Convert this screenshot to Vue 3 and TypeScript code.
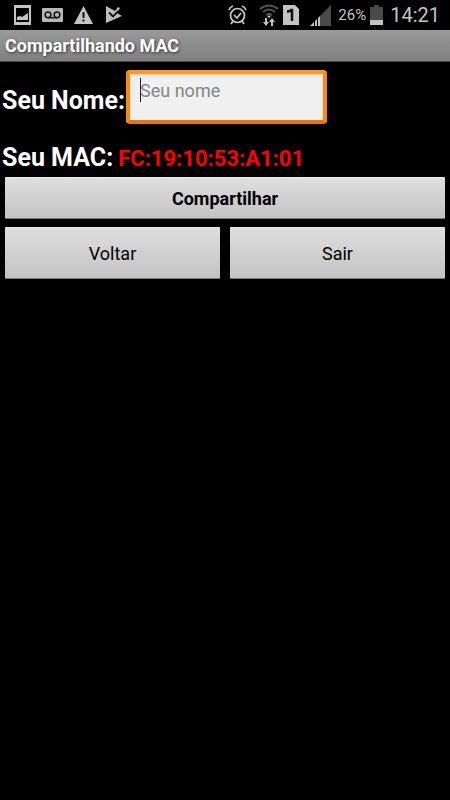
<script setup lang="ts">
import { ref } from 'vue'

const name = ref('')
const mac = 'FC:19:10:53:A1:01'
const battery = '26%'
const time = '14:21'
</script>

<template>
  <div class="screen">
    <header class="status">
      <div class="notifications">
        <svg width="17" height="20" viewBox="0 0 17 20" aria-hidden="true">
          <path fill="#c4c4c4" fill-rule="evenodd" d="M0 0h17v20H0zM2 3v14h13V3z" />
          <path fill="#c4c4c4" d="M3 15v-3l3-1 2 1 3-2 3-2v7z" />
        </svg>
        <svg width="21" height="14" viewBox="0 0 21 14" aria-hidden="true">
          <rect width="21" height="14" rx="1" fill="#b8b8b8" />
          <g fill="none" stroke="#151515" stroke-width="1.5">
            <circle cx="6" cy="6.8" r="2.9" />
            <circle cx="15" cy="6.8" r="2.9" />
            <path d="M6 9.7h9" />
          </g>
        </svg>
        <svg width="19" height="18" viewBox="0 0 19 18" aria-hidden="true">
          <path fill="#c4c4c4" d="M9.5 0L19 18H0z" />
          <path fill="#111" d="M8.500 6h2v6h-2zM8.500 13.500h2v2h-2z" />
        </svg>
        <svg class="check" width="17" height="18" viewBox="0 0 17 18" aria-hidden="true">
          <path fill="#bdbdbd" d="M0 0l9 5 3-4 2 1-3 5 5 3L0 17z" />
          <path fill="none" stroke="#111" stroke-width="1.8" d="M3 6.500l4 4L12.500 5" />
        </svg>
      </div>
      <div class="system">
        <svg class="alarm" width="19" height="20" viewBox="0 0 19 20" aria-hidden="true">
          <g fill="none" stroke="#c8c8c8" stroke-width="1.7">
            <circle cx="9.5" cy="10.5" r="7" />
            <path d="M6 10l3 3 4-5M1 5q1-3 4-4M18 5q-1-3-4-4M5 16l-2 3M14 16l2 3" />
          </g>
        </svg>
        <svg class="wifi" width="20" height="22" viewBox="0 0 20 22" aria-hidden="true">
          <path fill="none" stroke="#555" stroke-width="2" d="M1 5q9-7 18 0M4 8q6-5 12 0M7 11q3-2 6 0" />
          <path fill="#c4c4c4" d="M8 12q2-1 4 0l-2 2zM6 14h2v4h2l-3 4-3-4h2zM12 22v-4h-2l3-4 3 4h-2v4z" />
        </svg>
        <svg class="sim" width="16" height="20" viewBox="0 0 16 20" aria-hidden="true">
          <path fill="#c4c4c4" d="M0 0h12l4 4v16H0z" />
          <path fill="none" stroke="#111" stroke-width="2.5" d="M4 6.500q4 0 5-2.500V16" />
        </svg>
        <svg class="signal" width="21" height="21" viewBox="0 0 21 21" aria-hidden="true">
          <path fill="#4a4a4a" d="M21 0v21H10V11z" />
          <path fill="#c4c4c4" d="M0 21l4-4v4zM5 21v-5l2-2v7zM8 21v-8l2-2v10z" />
        </svg>
        <span class="battery-text">{{ battery }}</span>
        <svg class="battery" width="13" height="20" viewBox="0 0 13 20" aria-hidden="true">
          <path fill="#4a4a4a" d="M0 2h4V0h5v2h4v13H0z" />
          <path fill="#c4c4c4" d="M0 15h13v5H0z" />
        </svg>
        <time class="clock">{{ time }}</time>
      </div>
    </header>

    <h1 class="title">Compartilhando MAC</h1>

    <main class="content">
      <div class="row name-row">
        <label class="label" for="name">Seu Nome:</label>
        <div class="field">
          <input id="name" v-model="name" class="input" type="text" placeholder="Seu nome" />
          <span class="caret"></span>
        </div>
      </div>
      <div class="row mac-row">
        <span class="label">Seu MAC:</span>
        <span class="mac">{{ mac }}</span>
      </div>
      <div class="actions">
        <button class="button share" type="button">Compartilhar</button>
        <button class="button" type="button">Voltar</button>
        <button class="button" type="button">Sair</button>
      </div>
    </main>
  </div>
</template>

<style>
body {
  margin: 0;
  background: #000;
}
</style>

<style scoped>
.screen {
  min-height: 100vh;
  background: #000;
  color: #fff;
  font-family: Roboto, "Liberation Sans", sans-serif;
}

.status {
  display: flex;
  align-items: center;
  justify-content: space-between;
  height: 30px;
  padding: 0 10px 0 14px;
  color: #c4c4c4;
}

.status svg {
  flex: none;
}

.notifications,
.system {
  display: flex;
  align-items: center;
}

.notifications {
  gap: 11px;
}

.check {
  margin-left: 2px;
}

.wifi {
  margin-left: 12px;
}

.sim {
  margin-left: 4px;
}

.signal {
  margin-left: 11px;
}

.battery-text {
  margin-left: 7px;
  font-size: 15px;
}

.battery {
  margin-left: 4px;
}

.clock {
  margin-left: 7px;
  font-size: 20px;
}

.title {
  box-sizing: border-box;
  height: 32px;
  margin: 0;
  padding: 0 5px;
  border-bottom: 1px solid #4a4a4a;
  background: linear-gradient(#9a9a9a, #808080);
  font-size: 18px;
  font-weight: 700;
  line-height: 32px;
  text-shadow: 1px 1px 3px #333;
}

.row {
  display: flex;
  align-items: center;
  padding: 0 2px;
}

.name-row {
  padding-top: 8px;
}

.mac-row {
  align-items: baseline;
  gap: 5px;
  height: 30px;
  padding-top: 18px;
}

.label {
  font-size: 25px;
  font-weight: 700;
  line-height: 32px;
}

.name-row .label {
  padding-top: 8px;
}

.mac {
  color: #f00;
  font-size: 22px;
  font-weight: 700;
}

.field {
  position: relative;
  width: 201px;
  margin-left: 1px;
}

.input {
  box-sizing: border-box;
  display: block;
  width: 100%;
  height: 54px;
  padding: 0 10px 14px;
  border: 4px solid;
  border-color: #ff9a1c #f78a12 #ee7504;
  border-radius: 4px;
  outline: none;
  background: #f0f0f0;
  box-shadow: inset 0 1px 3px #ccc;
  color: #000;
  font-family: inherit;
  font-size: 18px;
}

.input::placeholder {
  color: #868686;
  opacity: 1;
}

.caret {
  position: absolute;
  top: 8px;
  left: 14px;
  width: 1px;
  height: 24px;
  background: #222;
}

.actions {
  display: grid;
  grid-template-columns: 1fr 1fr;
  gap: 8px 10px;
  padding: 5px;
}

.button {
  height: 52px;
  padding: 0 8px;
  border: 0;
  border-top: 1px solid #eee;
  border-bottom: 1px solid #777;
  border-radius: 1px;
  background: linear-gradient(#dedede, #c3c3c3);
  color: #000;
  font-family: inherit;
  font-size: 18px;
}

.share {
  grid-column: 1 / -1;
  height: 42px;
  font-weight: 700;
}
</style>
